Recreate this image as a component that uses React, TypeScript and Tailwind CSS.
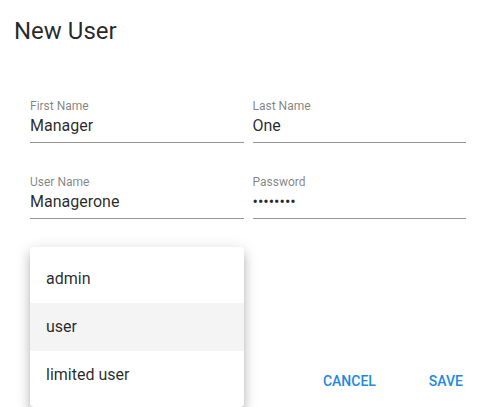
import { useState } from 'react'

const fields = [
  { label: 'First Name', value: 'Manager' },
  { label: 'Last Name', value: 'One' },
  { label: 'User Name', value: 'Managerone' },
  { label: 'Password', value: '', password: 8 },
]

const roles = ['admin', 'user', 'limited user']

export default function App() {
  const [role] = useState('user')

  return (
    <div className="relative w-[498px] h-[407px] overflow-hidden bg-white pt-[15px] font-['Roboto',sans-serif] text-[rgba(0,0,0,0.85)]">
      <h2 className="pl-[14px] text-[24px] leading-[32px] font-normal">New User</h2>

      <div className="mt-[51px] ml-[30px] w-[436px] grid grid-cols-2 gap-x-[9px] gap-y-[31px]">
        {fields.map((f) => (
          <div key={f.label} className="border-b border-[#949494] pb-[6px]">
            <div className="text-[12px] leading-[16px] text-[rgba(0,0,0,0.5)]">{f.label}</div>
            <div className="mt-[2px] h-[20px] text-[16px] leading-[20px]">
              {f.password ? '•'.repeat(f.password) : f.value}
            </div>
          </div>
        ))}
      </div>

      <div className="mt-[144px] flex justify-end gap-[21px] pr-[19px]">
        <button className="px-4 py-2 text-[14px] leading-[20px] font-medium uppercase text-[#1e88e5]">Cancel</button>
        <button className="px-4 py-2 text-[14px] leading-[20px] font-medium uppercase text-[#1e88e5]">Save</button>
      </div>

      {/* role select menu, open */}
      <ul className="absolute left-[30px] top-[247px] w-[214px] py-2 bg-white rounded-[4px] shadow-[0px_5px_5px_-3px_rgba(0,0,0,0.2),0px_8px_10px_1px_rgba(0,0,0,0.14),0px_3px_14px_2px_rgba(0,0,0,0.12)]">
        {roles.map((r) => (
          <li key={r} className={`h-[48px] flex items-center px-4 text-[16px] ${r === role ? 'bg-[#f4f4f4]' : ''}`}>
            {r}
          </li>
        ))}
      </ul>
    </div>
  )
}
